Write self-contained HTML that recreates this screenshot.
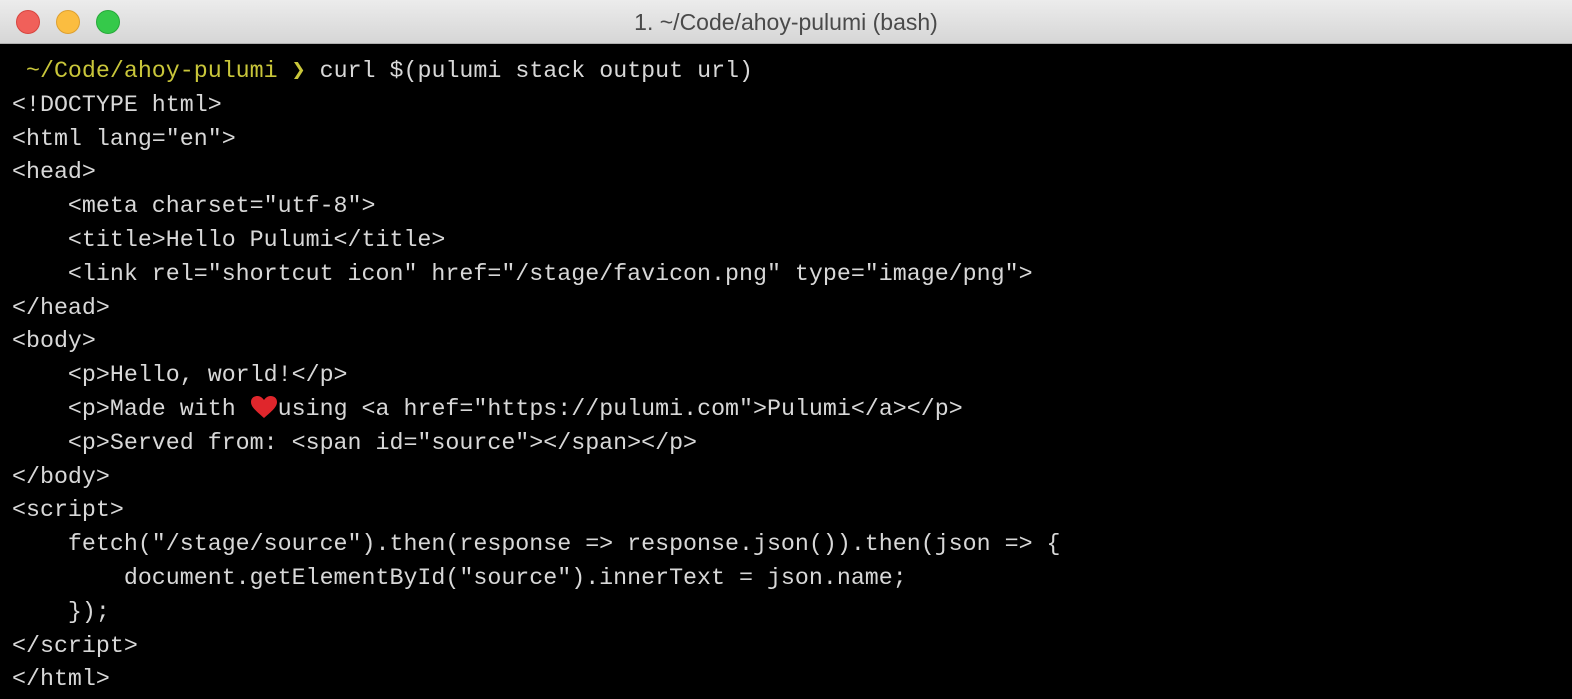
<!DOCTYPE html>
<html><head><style>
html,body{margin:0;padding:0;width:1572px;height:699px;overflow:hidden;background:#000}
.tb{position:absolute;left:0;top:0;width:1572px;height:44px;background:linear-gradient(#ececec,#d6d6d6);border-bottom:1px solid #b0b0b0;box-sizing:border-box}
.dot{position:absolute;top:10px;width:24px;height:24px;border-radius:50%;box-sizing:border-box}
.t{position:absolute;left:0;right:0;top:9px;line-height:27px;text-align:center;font:23px "Liberation Sans",sans-serif;color:#4a4a4a}
pre{position:absolute;left:12px;top:55px;margin:0;font:23.3px/33.8px "Liberation Mono",monospace;color:#d8d8d8;white-space:pre}
.y{color:#c9c63a}
svg{vertical-align:-4px}
</style></head><body>
<div class="tb">
<div class="dot" style="left:16px;background:#f0605a;border:1px solid #d8453f"></div>
<div class="dot" style="left:56px;background:#fbbd40;border:1px solid #dea030"></div>
<div class="dot" style="left:96px;background:#35c94a;border:1px solid #27a93a"></div>
<div class="t">1. ~/Code/ahoy-pulumi (bash)</div>
</div>
<pre><span class="y"> ~/Code/ahoy-pulumi ❯</span> curl $(pulumi stack output url)
&lt;!DOCTYPE html&gt;
&lt;html lang="en"&gt;
&lt;head&gt;
    &lt;meta charset="utf-8"&gt;
    &lt;title&gt;Hello Pulumi&lt;/title&gt;
    &lt;link rel="shortcut icon" href="/stage/favicon.png" type="image/png"&gt;
&lt;/head&gt;
&lt;body&gt;
    &lt;p&gt;Hello, world!&lt;/p&gt;
    &lt;p&gt;Made with <svg width="28" height="24" viewBox="0 0 28 24"><path d="M14 23 C6 16 1 12 1 7 C1 3 4 1 7.5 1 C10.5 1 12.5 3 14 5 C15.5 3 17.5 1 20.5 1 C24 1 27 3 27 7 C27 12 22 16 14 23Z" fill="#e0262c"/></svg>using &lt;a href="https://pulumi.com"&gt;Pulumi&lt;/a&gt;&lt;/p&gt;
    &lt;p&gt;Served from: &lt;span id="source"&gt;&lt;/span&gt;&lt;/p&gt;
&lt;/body&gt;
&lt;script&gt;
    fetch("/stage/source").then(response =&gt; response.json()).then(json =&gt; {
        document.getElementById("source").innerText = json.name;
    });
&lt;/script&gt;
&lt;/html&gt;</pre>
</body></html>
